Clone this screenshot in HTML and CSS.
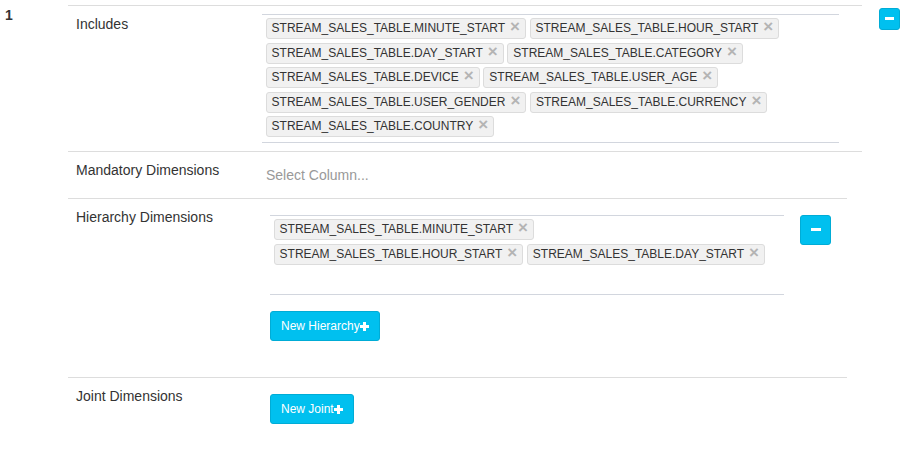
FILE: index.html
```html
<!DOCTYPE html>
<html lang="en">
<head>
<meta charset="utf-8">
<title>Cube dimensions</title>
<link rel="stylesheet" href="styles.css">
</head>
<body>
<div class="cube">
  <div class="cube-index">1</div>
  <div class="cube-body">
    <div class="field field--wide">
      <div class="field-label">Includes</div>
      <div class="field-value">
        <ul class="chips chips--includes">
          <li class="chip">STREAM_SALES_TABLE.MINUTE_START<span class="chip-x">×</span></li>
          <li class="chip">STREAM_SALES_TABLE.HOUR_START<span class="chip-x">×</span></li>
          <li class="chip">STREAM_SALES_TABLE.DAY_START<span class="chip-x">×</span></li>
          <li class="chip">STREAM_SALES_TABLE.CATEGORY<span class="chip-x">×</span></li>
          <li class="chip">STREAM_SALES_TABLE.DEVICE<span class="chip-x">×</span></li>
          <li class="chip">STREAM_SALES_TABLE.USER_AGE<span class="chip-x">×</span></li>
          <li class="chip">STREAM_SALES_TABLE.USER_GENDER<span class="chip-x">×</span></li>
          <li class="chip">STREAM_SALES_TABLE.CURRENCY<span class="chip-x">×</span></li>
          <li class="chip">STREAM_SALES_TABLE.COUNTRY<span class="chip-x">×</span></li>
        </ul>
      </div>
    </div>
    <div class="field field--wide">
      <div class="field-label">Mandatory Dimensions</div>
      <div class="field-value">
        <div class="select-empty">Select Column...</div>
      </div>
    </div>
    <div class="field field--narrow">
      <div class="field-label">Hierarchy Dimensions</div>
      <div class="field-value">
        <div class="subtable subtable--hier">
          <div class="subcell">
            <ul class="chips chips--hier">
              <li class="chip">STREAM_SALES_TABLE.MINUTE_START<span class="chip-x">×</span></li>
              <li class="chip">STREAM_SALES_TABLE.HOUR_START<span class="chip-x">×</span></li>
              <li class="chip">STREAM_SALES_TABLE.DAY_START<span class="chip-x">×</span></li>
            </ul>
          </div>
          <div class="subcell">
            <button class="btn btn-icon" type="button"><span class="minus minus--sm"></span></button>
          </div>
          <div class="subcell">
            <button class="btn" type="button">New Hierarchy<svg class="plus" width="9" height="9" viewBox="0 0 9 9"><rect x="3" y="0" width="3" height="9" fill="#fff"/><rect x="0" y="3" width="9" height="3" fill="#fff"/></svg></button>
          </div>
        </div>
      </div>
    </div>
    <div class="field field--narrow">
      <div class="field-label">Joint Dimensions</div>
      <div class="field-value">
        <div class="subtable">
          <div class="subcell">
            <button class="btn" type="button">New Joint<svg class="plus" width="9" height="9" viewBox="0 0 9 9"><rect x="3" y="0" width="3" height="9" fill="#fff"/><rect x="0" y="3" width="9" height="3" fill="#fff"/></svg></button>
          </div>
        </div>
      </div>
    </div>
  </div>
  <div class="cube-actions">
    <button class="btn btn-xs" type="button"><span class="minus"></span></button>
  </div>
</div>
</body>
</html>
```
FILE: styles.css
```css
html, body {
  margin: 0;
  padding: 0;
  background: #fff;
}

body {
  font-family: "Liberation Sans", Arial, sans-serif;
  font-size: 14px;
  line-height: 20px;
  color: #333;
}

.cube {
  display: grid;
  grid-template-columns: 68px 794px 1fr;
  padding-top: 5px;
}

.cube-index {
  padding-left: 5px;
  font-weight: bold;
}

.cube-actions {
  padding-left: 17px;
}

.field {
  display: grid;
  grid-template-columns: 194px 585px;
  border-top: 1px solid #dddddd;
}

.field--wide {
  width: 794px;
}

.field--narrow {
  width: 779px;
}

.field-label {
  padding: 8px;
}

.field-value {
  padding: 8px 8px 8px 0;
}

.chips {
  list-style: none;
  margin: 0;
  padding: 0 0 5px 0;
  display: flex;
  flex-wrap: wrap;
  align-content: flex-start;
  border-top: 1px solid #d2d6de;
  border-bottom: 1px solid #d2d6de;
}

.chips--hier {
  width: 514px;
  height: 80px;
  box-sizing: border-box;
}

.chip {
  margin: 3.4px 0 0 3.6px;
  padding: 0 5px 0 5px;
  height: 21px;
  box-sizing: border-box;
  border: 1px solid #dcdcdc;
  border-radius: 3px;
  background: #f1f1f1;
  font-size: 12px;
  line-height: 19px;
  color: #333;
  white-space: nowrap;
}

.chip-x {
  display: inline-block;
  vertical-align: top;
  margin-left: 5px;
  color: #b4b4b4;
  font-weight: bold;
  font-size: 17px;
  line-height: 15px;
}

.select-empty {
  height: 30px;
  box-sizing: border-box;
  padding: 5px 4px;
  color: #999;
}

.subtable {
  display: grid;
  grid-template-columns: 530px auto;
  margin-bottom: 20px;
}

.subcell {
  padding: 8px;
}

.btn {
  display: inline-flex;
  align-items: center;
  justify-content: center;
  height: 30px;
  box-sizing: border-box;
  padding: 0 10px;
  border: 1px solid #00acd6;
  border-radius: 3px;
  background: #00c0ef;
  color: #fff;
  font-family: "Liberation Sans", Arial, sans-serif;
  font-size: 12px;
  line-height: 18px;
  cursor: pointer;
}

.btn-xs {
  width: 21px;
  height: 22px;
  padding: 0;
}

.btn-icon {
  width: 31px;
  height: 30px;
  padding: 0;
}

.minus {
  display: block;
  width: 9px;
  height: 3px;
  background: #fff;
}

.minus--sm {
  width: 10px;
}

.plus {
  display: block;
  margin-left: 0;
  margin-top: 1px;
}
```
